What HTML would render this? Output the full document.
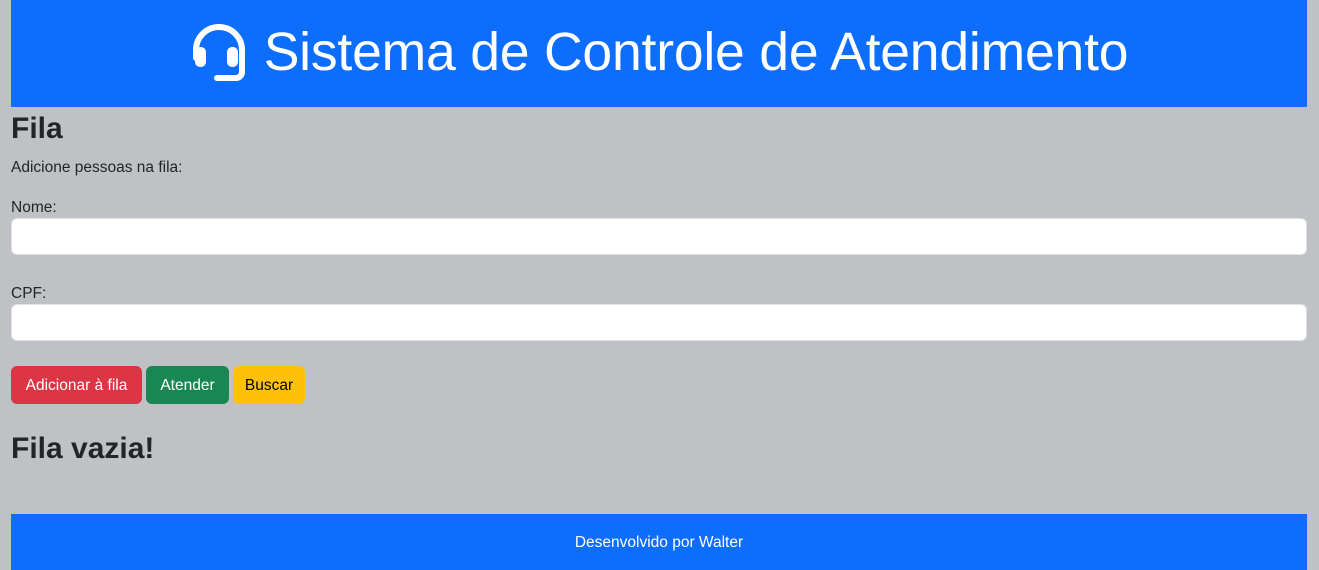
<!DOCTYPE html>
<html><head><meta charset="utf-8"><style>
*{box-sizing:border-box}
body{margin:0;background:#c0c1c5;font-family:"Liberation Sans",sans-serif;color:#212529;width:1319px;height:570px;overflow:hidden;position:relative}
header{position:absolute;left:11px;top:0;width:1296px;height:107px;background:#0d6efd;color:#fff;display:flex;align-items:center;justify-content:center;padding-bottom:2px}
header span{font-size:53.5px;font-weight:300;margin-left:16px;letter-spacing:-0.2px}
h2{margin:0;font-size:30px;font-weight:bold}
.t{font-size:15.5px;position:absolute;left:11px}
.in{position:absolute;left:11px;width:1296px;height:37px;background:#fff;border:1px solid #dee2e6;border-radius:6px}
.b{position:absolute;top:366px;height:38px;border-radius:6px;font-size:15.5px;display:flex;align-items:center;justify-content:center;padding-top:2px}
footer{position:absolute;left:11px;top:514px;width:1296px;height:56px;background:#0d6efd;color:#fff;font-size:15.5px;display:flex;align-items:center;justify-content:center;padding-top:2px}
</style></head><body>
<header><svg width="58" height="58" viewBox="0 0 58 58" fill="none" stroke="#fff" stroke-width="6" stroke-linecap="round"><path d="M6 34 V26 A23 23 0 0 1 52 26 V48 A6 6 0 0 1 46 54 H27"/><rect x="6" y="24" width="9" height="18" rx="4" fill="#fff" stroke-width="2"/><rect x="38" y="24" width="9" height="18" rx="4" fill="#fff" stroke-width="2"/></svg><span>Sistema de Controle de Atendimento</span></header>
<h2 style="position:absolute;left:11px;top:112px">Fila</h2>
<div class="t" style="top:159px">Adicione pessoas na fila:</div>
<div class="t" style="top:199px">Nome:</div>
<div class="in" style="top:218px"></div>
<div class="t" style="top:285px">CPF:</div>
<div class="in" style="top:304px"></div>
<div class="b" style="left:11px;width:131px;background:#dc3545;color:#fff">Adicionar à fila</div>
<div class="b" style="left:146px;width:83px;background:#198754;color:#fff">Atender</div>
<div class="b" style="left:233px;width:72px;background:#ffc107;color:#000">Buscar</div>
<h2 style="position:absolute;left:11px;top:432px">Fila vazia!</h2>
<footer>Desenvolvido por Walter</footer>
</body></html>
